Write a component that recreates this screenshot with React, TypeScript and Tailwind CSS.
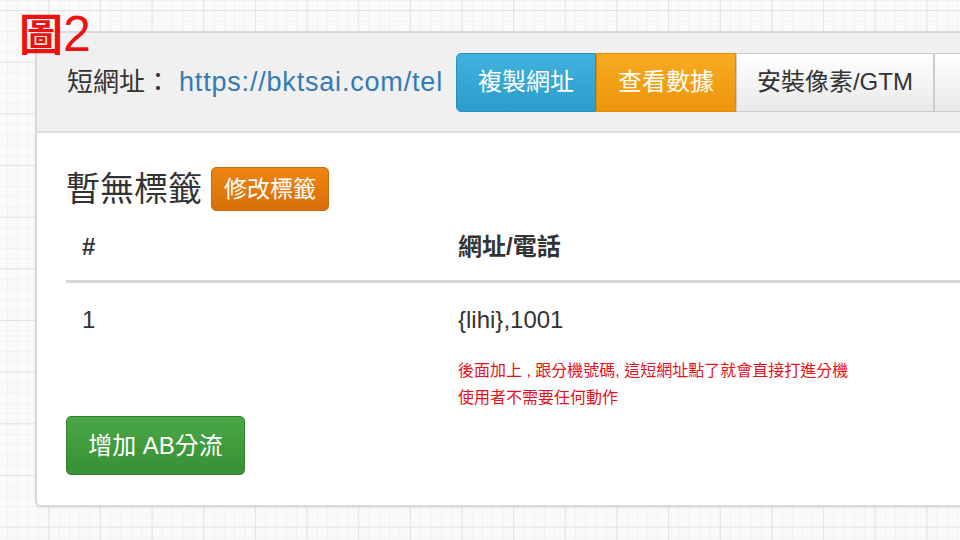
const font = "font-['Liberation_Sans','Noto_Sans_CJK_TC',sans-serif]";

function HeaderButtons() {
  return (
    <div className="flex h-[59px] ml-[13px]">
      <div className="flex items-center px-[21px] rounded-l-[5px] border border-[#2a8fba] bg-[linear-gradient(#41b2de,#2b9dcb)] text-white text-[24px]">
        複製網址
      </div>
      <div className="flex items-center px-[21px] border border-[#e08a08] bg-[linear-gradient(#f8ab22,#ec950a)] text-white text-[24px]">
        查看數據
      </div>
      <div className="flex items-center px-[20px] border border-[#cccccc] bg-[linear-gradient(#ffffff,#e9e9e9)] text-[#333] text-[24px]">
        安裝像素/GTM
      </div>
      <div className="w-[60px] border border-[#cccccc] bg-[linear-gradient(#ffffff,#e9e9e9)]" />
    </div>
  );
}

export default function App() {
  return (
    <div
      className={`relative w-[960px] h-[540px] overflow-hidden pt-[31px] pl-[35px] bg-[#fafafa] bg-[linear-gradient(to_right,#e3e3e3_1px,transparent_1px),linear-gradient(to_bottom,#e3e3e3_1px,transparent_1px),linear-gradient(to_right,#f1f1f1_1px,transparent_1px),linear-gradient(to_bottom,#f1f1f1_1px,transparent_1px)] bg-[size:51.67px_51.67px,51.67px_51.67px,10.33px_10.33px,10.33px_10.33px] bg-[position:-3.4px_10px,-3.4px_10px,-3.4px_0px,-3.4px_0px] ${font}`}
    >
      <div className="w-[980px] h-[476px] rounded-[6px] border-2 border-[#d9d9d9] bg-white overflow-hidden shadow-[0_1px_2px_rgba(0,0,0,0.08)]">
        <div className="h-[100px] bg-[#f0f0f0] border-b-2 border-[#dddddd] flex items-center pl-[30px]">
          <span className="text-[26px] text-[#333]">短網址：</span>
          <span className="ml-[8px] text-[27px] tracking-[0.03em] text-[#337ab7]">https://bktsai.com/tel</span>
          <HeaderButtons />
        </div>

        <div className="pl-[29px] pt-[34px] pb-[30px]">
          <div className="flex items-center h-[44px]">
            <span className="text-[34px] text-[#333] leading-none">暫無標籤</span>
            <span className="ml-[9px] h-[44px] flex items-center px-[12px] rounded-[5px] border border-[#c96a08] bg-[linear-gradient(#ee8514,#d96f08)] text-white text-[23px]">
              修改標籤
            </span>
          </div>

          <div className="grid grid-cols-[376px_1fr] h-[72px] items-center border-b-[3px] border-[#d6d6d6] text-[24px] font-bold text-[#333]">
            <div className="pl-[16px] pt-[2px]">#</div>
            <div className="pl-[16px] pt-[2px]">網址/電話</div>
          </div>

          <div className="grid grid-cols-[376px_1fr] pt-[21px] text-[#333]">
            <div className="pl-[16px] text-[24px] leading-[32px]">1</div>
            <div className="pl-[16px]">
              <div className="text-[24px] leading-[32px]">{"{lihi},1001"}</div>
              <div className="mt-[21px] text-[16px] leading-[27px] text-[#e8101a]">
                <div>後面加上 , 跟分機號碼, 這短網址點了就會直接打進分機</div>
                <div>使用者不需要任何動作</div>
              </div>
            </div>
          </div>

          <div className="mt-[5px] w-[179px] h-[59px] flex items-center justify-center rounded-[5px] border border-[#2f812c] bg-[linear-gradient(#4aa846,#388f34)] text-white text-[24px]">
            增加 AB分流
          </div>
        </div>
      </div>

      <div className="absolute left-[19px] top-[9px] flex items-baseline text-[#ee1111] leading-none">
        <span className="text-[44px] font-bold">圖</span>
        <span className="text-[50px]">2</span>
      </div>
    </div>
  );
}
